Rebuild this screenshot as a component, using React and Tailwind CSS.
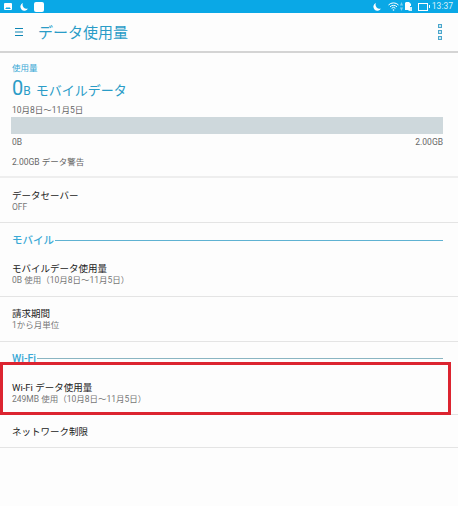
function Row({ title, sub, className }) {
    return (
        <div className={`flex flex-col justify-center pl-[12px] pr-[11px] border-b border-[#e4e4e4] ${className}`}>
            <p className="text-[9.5px] leading-[13px] text-[#222]">{title}</p>
            {sub && <p className="text-[8.5px] leading-[11px] text-[#777]">{sub}</p>}
        </div>
    );
}

function SectionLabel({ label, className, labelClass, lineClass }) {
    return (
        <div className={`flex items-center gap-[1px] pl-[12px] pr-[15px] ${className}`}>
            <span className={`text-[#3aa9d6] font-medium ${labelClass}`}>{label}</span>
            <div className={`flex-1 h-px ${lineClass}`}></div>
        </div>
    );
}

function StatusBar() {
    return (
        <div className="h-[13px] bg-[#0aa8e6] flex items-center pl-[4px] pr-[5px] text-white">
            <svg width="8" height="7" viewBox="0 0 8 7" className="mr-[8px]">
                <rect width="8" height="7" rx="1" fill="#fff" />
                <path d="M1 6l2-2 1 1 1-1 2 2z" fill="#0aa8e6" />
            </svg>
            <svg width="8" height="8" viewBox="0 0 8 8" className="mr-[6px]">
                <path d="M3 0a4 4 0 1 0 5 5.5A4 4 0 0 1 3 0z" fill="#fff" />
            </svg>
            <div className="w-[10px] h-[10px] rounded-[2px] bg-white"></div>
            <div className="flex-1"></div>
            <svg width="8" height="8" viewBox="0 0 8 8" className="mr-[7px]">
                <path d="M3 0a4 4 0 1 0 5 5.5A4 4 0 0 1 3 0z" fill="#fff" />
            </svg>
            <svg width="11" height="9" viewBox="0 0 11 9" className="mr-[1px]" fill="none" stroke="#fff">
                <path d="M.5 3a7 7 0 0 1 10 0M2 4.8a5 5 0 0 1 7 0M3.6 6.3a2.6 2.6 0 0 1 3.8 0" strokeWidth="1" />
                <circle cx="5.5" cy="8" r=".8" fill="#fff" stroke="none" />
            </svg>
            <svg width="3" height="9" viewBox="0 0 3 9" className="mr-[2px]">
                <path d="M1.5 0L3 3.5H0z" fill="#7fd0f0" />
                <path d="M1.5 9L3 5.5H0z" fill="#7fd0f0" />
            </svg>
            <svg width="7" height="9" viewBox="0 0 7 9" className="mr-[6px]">
                <path d="M0 1l1-1h3l2 2v2H5v4H0z" fill="#fff" />
                <path d="M3.5 5L7 5v4H3.500z" fill="#fff" opacity=".8" />
            </svg>
            <div className="w-[10px] h-[8px] border border-white mr-[1px]"></div>
            <div className="w-px h-[3px] bg-white mr-[2px]"></div>
            <span className="text-[8.5px] leading-none text-[#d8f1fb]">13:37</span>
        </div>
    );
}

function Header() {
    return (
        <div className="h-[40px] flex items-center pl-[15px] pr-[16px] border-b-2 border-[#d4d4d4]">
            <svg width="8" height="8" viewBox="0 0 8 8" className="text-[#0f86b4]">
                <path d="M0 .5h8M0 4h8M0 7.500h8" stroke="currentColor" strokeWidth="1" />
            </svg>
            <h1 className="ml-[15px] pt-[3px] text-[15px] text-[#2a9cc7]">データ使用量</h1>
            <div className="flex-1"></div>
            <div className="flex flex-col gap-[2px]">
                <div className="w-[4px] h-[4px] border border-[#4aa6cc] bg-[#cfe8f2]"></div>
                <div className="w-[4px] h-[4px] border border-[#4aa6cc] bg-[#cfe8f2]"></div>
                <div className="w-[4px] h-[4px] border border-[#4aa6cc] bg-[#cfe8f2]"></div>
            </div>
        </div>
    );
}

export default function App() {
    return (
        <div className="relative w-[458px] h-[506px] bg-[#fdfdfd] overflow-hidden" style={{ fontFamily: 'Roboto, "Noto Sans CJK JP", sans-serif' }}>
            <StatusBar />
            <Header />

            <div className="h-[125px] pl-[12px] pr-[15px] pt-[10px] border-b-2 border-[#eeeeee]">
                <p className="text-[8.5px] leading-[11px] text-[#3aa9d6]">使用量</p>
                <p className="mt-[2px] h-[25px] flex items-baseline text-[#2a9cc7] leading-[25px]">
                    <span className="text-[20px]">0</span>
                    <span className="text-[12px]">B</span>
                    <span className="ml-[5px] text-[13px]">モバイルデータ</span>
                </p>
                <p className="mt-[4px] text-[8.5px] leading-[11px] text-[#666]">10月8日〜11月5日</p>
                <div className="-ml-px mt-[1px] h-[17px] bg-[#ced8dc]"></div>
                <div className="mt-[3px] flex justify-between text-[8.5px] leading-[11px] text-[#666]">
                    <span>0B</span>
                    <span>2.00GB</span>
                </div>
                <p className="mt-[9px] text-[8.5px] leading-[11px] text-[#666]">2.00GB データ警告</p>
            </div>

            <Row title="データセーバー" sub="OFF" className="h-[45px] pt-[1px]" />

            <SectionLabel label="モバイル" className="h-[32px] pt-[3px]" labelClass="text-[10.5px]" lineClass="bg-[#5fb2d2]" />
            <Row title="モバイルデータ使用量" sub="0B 使用（10月8日〜11月5日）" className="h-[42px] pb-[3px]" />
            <Row title="請求期間" sub="1から月単位" className="h-[45px]" />

            <SectionLabel label="Wi-Fi" className="h-[20px] pt-[13px]" labelClass="text-[10.5px] leading-[10px]" lineClass="bg-[#8ab5c2]" />
            <Row title="Wi-Fi データ使用量" sub="249MB 使用（10月8日〜11月5日）" className="h-[53px] pt-[10px]" />
            <Row title="ネットワーク制限" className="h-[33px]" />

            {/* annotation box on top of the screenshot */}
            <div className="absolute left-0 top-[362px] w-[451px] h-[53px] border-[3px] border-[#dc2430]"></div>
        </div>
    );
}
